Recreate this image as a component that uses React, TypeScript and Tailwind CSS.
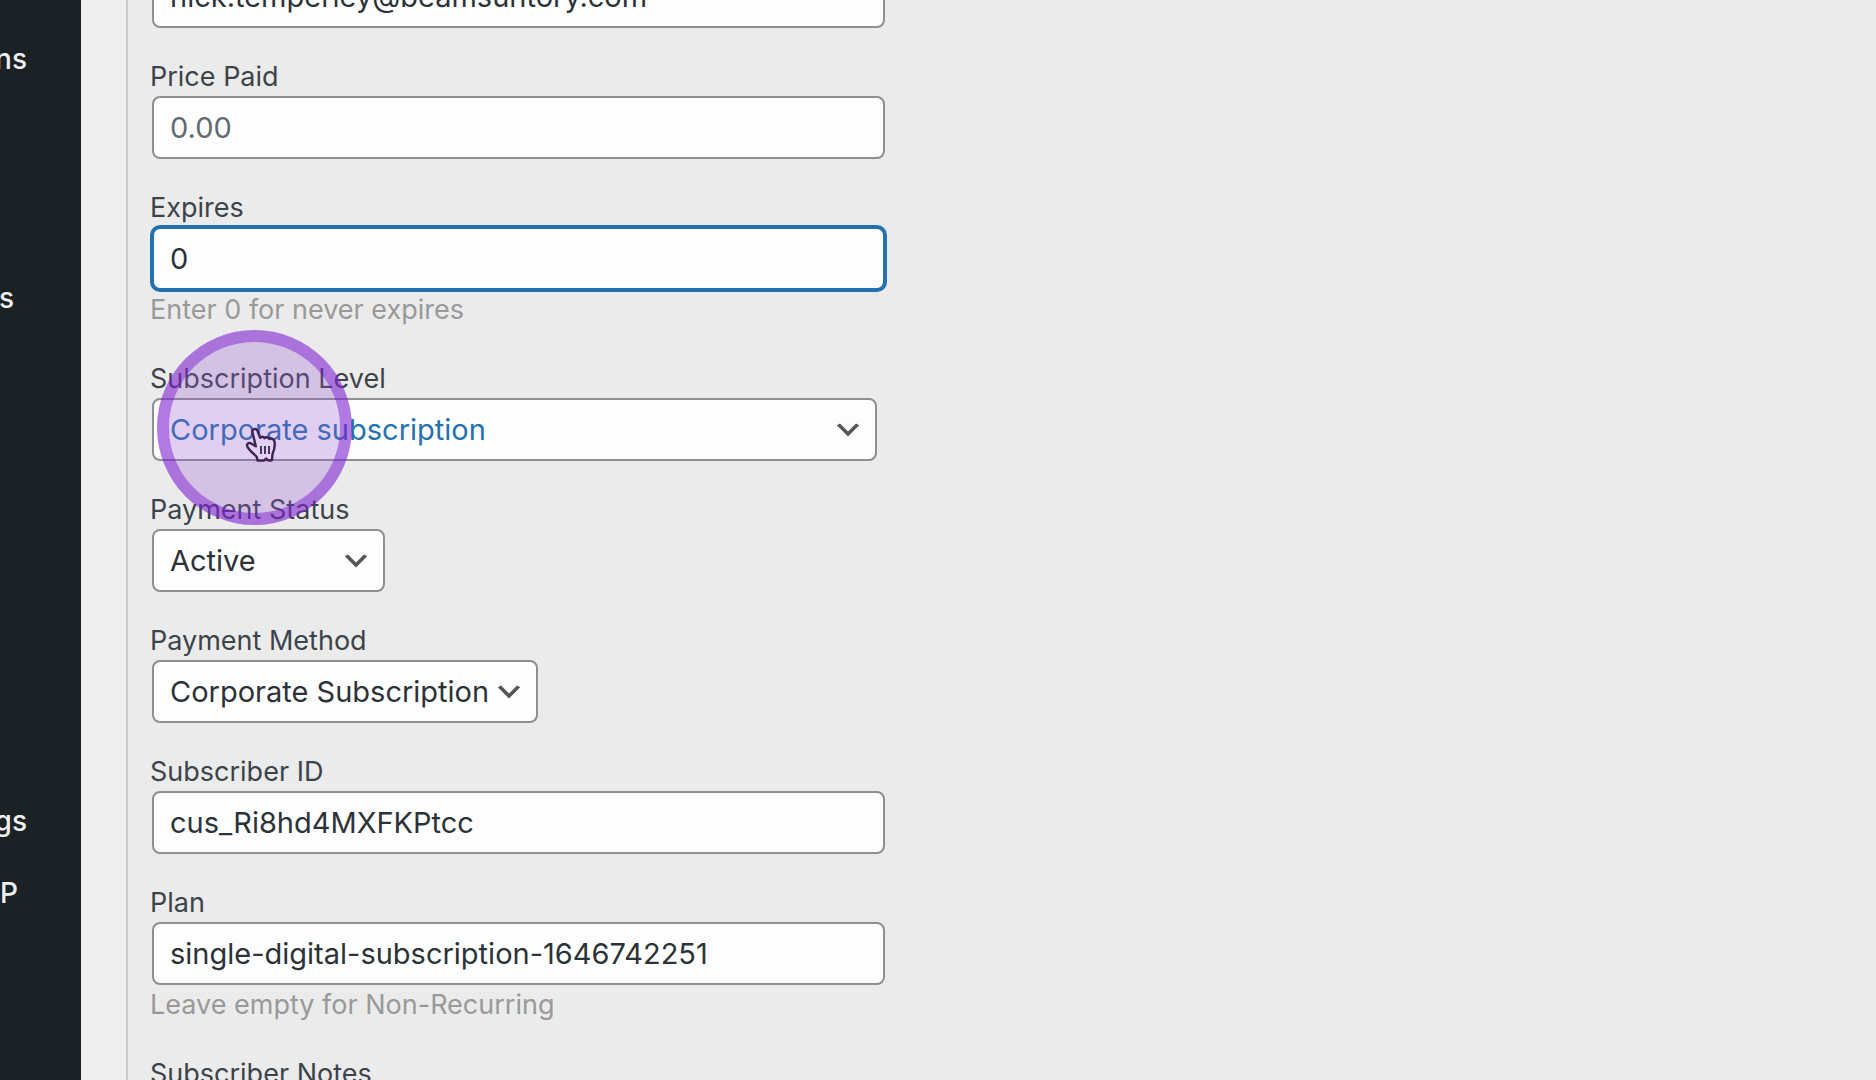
import { useId, type ReactNode } from 'react'

const controlClass =
  'ml-0.5 h-[63px] rounded-lg border-2 border-[#8c8f94] bg-[#fdfdfd] px-4 text-[29px] leading-10 outline-none'

interface FieldProps {
  id: string
  label: string
  hint?: string
  children?: ReactNode
}

function Field({ id, label, hint, children }: FieldProps) {
  return (
    <div className="flex flex-col items-start">
      <label htmlFor={id} className="text-[27px] leading-[38px] text-[#3c434a]">
        {label}
      </label>
      {children}
      {hint && <p className="text-[27px] leading-10 text-[#999999]">{hint}</p>}
    </div>
  )
}

interface TextFieldProps {
  label: string
  value?: string
  placeholder?: string
  hint?: string
  active?: boolean
}

function TextField({ label, value, placeholder, hint, active = false }: TextFieldProps) {
  const id = useId()

  return (
    <Field id={id} label={label} hint={hint}>
      <input
        id={id}
        type="text"
        defaultValue={value}
        placeholder={placeholder}
        className={`${controlClass} w-full max-w-[733px] text-[#2c3338] placeholder:text-[#646970] ${
          active ? 'border-[#2271b1] ring-2 ring-[#2271b1]' : ''
        }`}
      />
    </Field>
  )
}

interface SelectFieldProps {
  label: string
  options: string[]
  widthClass: string
  textClass?: string
}

function SelectField({ label, options, widthClass, textClass = 'text-[#2c3338]' }: SelectFieldProps) {
  const id = useId()

  return (
    <Field id={id} label={label}>
      <div className={`relative w-full ${widthClass}`}>
        <select id={id} className={`${controlClass} w-full appearance-none ${textClass}`}>
          {options.map((option) => (
            <option key={option}>{option}</option>
          ))}
        </select>
        <svg
          viewBox="0 0 20 20"
          className="pointer-events-none absolute right-[11px] top-4 size-8 fill-[#555555]"
          aria-hidden="true"
        >
          <path d="M5 6l5 5 5-5 2 1-7 7-7-7 2-1z" />
        </svg>
      </div>
    </Field>
  )
}

function Sidebar() {
  return (
    <nav className="flex w-[81px] shrink-0 flex-col items-end overflow-hidden bg-[#1b2225] text-[28px] font-medium leading-10 text-[#f0f0f1]">
      <a href="#subscriptions" className="mt-[39px] pr-[54px]">ns</a>
      <a href="#posts" className="mt-[199px] pr-[67px]">s</a>
      <a href="#settings" className="mt-[483px] pr-[54px]">gs</a>
      <a href="#wp" className="mt-8 pr-[63px]">P</a>
    </nav>
  )
}

/* Click highlight with the hand pointer beneath it */
function PointerHighlight() {
  return (
    <div className="pointer-events-none absolute left-[157px] top-[330px] size-[195px]">
      <svg viewBox="0 0 32 36" className="absolute left-[88px] top-[97px] h-9 w-8" aria-hidden="true">
        <path
          d="M7.500 5.500C6.500 2 11 .8 12.500 3.800l2.700 7c1-1.600 3.500-1.500 4.300.4 1.200-1.500 4-1.200 4.800.9 1.700-1.200 4.700-.4 5.200 2.400.8 5-.1 8.500-2 12.500l-.5 6c-2.500.8-4.800.4-6-1.500l-1.800 2h-6.700l-.7-3.500C9 27 5 24 2.500 19.800c-1.500-2.800 1-4.800 3.700-3.300l4.600 2.800L7.500 5.500z"
          fill="#ffffff"
          stroke="#1a0d22"
          strokeWidth="2.400"
          strokeLinejoin="round"
        />
        <path d="M16 19v8M20 19v8M24 19v8" stroke="#1a0d22" strokeWidth="1.800" fill="none" />
      </svg>
      <div className="absolute inset-0 rounded-full border-12 border-[#7f23d2]/60 bg-[#9c59d9]/28 bg-clip-padding" />
    </div>
  )
}

export default function App() {
  return (
    <div className="relative flex h-screen overflow-hidden bg-[#eeeeee] font-['Inter',sans-serif]">
      <Sidebar />
      <main className="ml-[45px] grow border-l-2 border-[#c9cacb] bg-[#ebebeb] pl-[22px]">
        <form className="-mt-[73px] flex flex-col gap-[30px]">
          <TextField label="Email" value="nick.temperley@beamsuntory.com" />
          <TextField label="Price Paid" placeholder="0.00" />
          <TextField label="Expires" value="0" hint="Enter 0 for never expires" active />
          <SelectField
            label="Subscription Level"
            options={['Corporate subscription']}
            widthClass="max-w-[725px]"
            textClass="text-[#2271b1]"
          />
          <SelectField label="Payment Status" options={['Active']} widthClass="max-w-[233px]" />
          <SelectField label="Payment Method" options={['Corporate Subscription']} widthClass="max-w-[386px]" />
          <TextField label="Subscriber ID" value="cus_Ri8hd4MXFKPtcc" />
          <TextField label="Plan" value="single-digital-subscription-1646742251" hint="Leave empty for Non-Recurring" />
          <TextField label="Subscriber Notes" />
        </form>
      </main>
      <PointerHighlight />
    </div>
  )
}
